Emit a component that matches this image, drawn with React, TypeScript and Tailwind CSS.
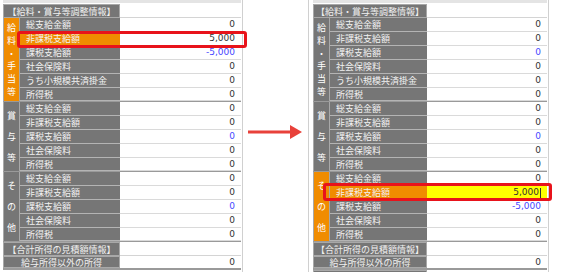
import React from 'react';

type Row = { label: string; value: string; blue?: boolean; yellow?: boolean; hl?: boolean };
type Group = { chars: string[]; rows: Row[]; orange?: boolean };

const jp = { fontFamily: '"Noto Sans CJK JP", "Noto Sans", sans-serif' };
const num = { fontFamily: '"DejaVu Sans", "Liberation Sans", sans-serif' };

const makeGroups = (right: boolean): Group[] => [
  {
    chars: ['給', '料', '・', '手', '当', '等'],
    orange: !right,
    rows: [
      { label: '総支給金額', value: '0' },
      { label: '非課税支給額', value: right ? '0' : '5,000', hl: !right },
      { label: '課税支給額', value: right ? '0' : '-5,000', blue: true },
      { label: '社会保険料', value: '0' },
      { label: 'うち小規模共済掛金', value: '0' },
      { label: '所得税', value: '0' },
    ],
  },
  {
    chars: ['賞', '与', '等'],
    rows: [
      { label: '総支給金額', value: '0' },
      { label: '非課税支給額', value: '0' },
      { label: '課税支給額', value: '0', blue: true },
      { label: '社会保険料', value: '0' },
      { label: '所得税', value: '0' },
    ],
  },
  {
    chars: ['そ', 'の', '他'],
    orange: right,
    rows: [
      { label: '総支給金額', value: '0' },
      { label: '非課税支給額', value: right ? '5,000' : '0', hl: right, yellow: right },
      { label: '課税支給額', value: right ? '-5,000' : '0', blue: true },
      { label: '社会保険料', value: '0' },
      { label: '所得税', value: '0' },
    ],
  },
];

const HeaderRow = ({ text, labelW, valueW }: { text: string; labelW: number; valueW: number }) => (
  <div className="flex h-[14px]">
    <div
      className="flex items-center justify-center border border-[#a8a8a8] bg-[#767676] text-[9px] leading-none text-[#f0f0f0]"
      style={{ ...jp, width: labelW }}
    >
      {text}
    </div>
    <div className="border-b border-[#d4d4d4] bg-white" style={{ width: valueW }} />
  </div>
);

const Sheet = ({ right }: { right: boolean }) => {
  const groupW = 17;
  const labelW = right ? 97 : 100;
  const valueW = right ? 120 : 121;
  const groups = makeGroups(right);

  return (
    <div className="flex flex-col border-t-[3px] border-[#e4e4e4] pt-[1px]">
      <HeaderRow text="【給料・賞与等調整情報】" labelW={groupW + labelW} valueW={valueW} />
      {groups.map((g, gi) => (
        <div key={gi} className="flex border-b border-[#9a9a9a]">
          <div
            className={`flex flex-col items-center justify-around border-r border-l border-[#a8a8a8] py-[3px] text-[9px] leading-[9px] text-white ${
              g.orange ? 'bg-[#f08c00]' : 'bg-[#767676]'
            }`}
            style={{ ...jp, width: groupW }}
          >
            {g.chars.map((c, ci) => (
              <span key={ci} className="block">
                {c}
              </span>
            ))}
          </div>
          <div className="flex flex-col">
            {g.rows.map((r, ri) => (
              <div key={ri} className="flex" style={{ height: ri === g.rows.length - 1 ? 13 : 14 }}>
                <div
                  className={`flex items-center border-b border-[#b4b4b4] pl-[6px] text-[9px] leading-none text-[#f2f2f2] ${
                    r.hl ? 'bg-[#f08c00]' : 'bg-[#767676]'
                  }`}
                  style={{ ...jp, width: labelW }}
                >
                  {r.label}
                </div>
                <div
                  className={`flex items-center justify-end border-b border-[#dadada] pr-[6px] text-[9px] leading-none ${
                    r.yellow ? 'bg-[#ffff00]' : 'bg-white'
                  } ${r.blue ? 'text-[#4848ff]' : 'text-[#333333]'}`}
                  style={{ ...num, width: valueW }}
                >
                  {r.value}
                  {r.yellow && <span className="ml-[1px] h-[10px] w-[1px] bg-[#333333]" />}
                </div>
              </div>
            ))}
          </div>
        </div>
      ))}
      <HeaderRow text="【合計所得の見積額情報】" labelW={groupW + labelW} valueW={valueW} />
      <div className="flex h-[14px] border-b-2 border-[#9a9a9a]">
        <div
          className="flex items-center justify-center border border-[#a8a8a8] bg-[#767676] text-[9px] leading-none text-[#f0f0f0]"
          style={{ ...jp, width: groupW + labelW }}
        >
          給与所得以外の所得
        </div>
        <div
          className="flex items-center justify-end bg-white pr-[6px] text-[9px] leading-none text-[#333333]"
          style={{ ...num, width: valueW }}
        >
          0
        </div>
      </div>
      {right && <HeaderRow text="【社会保険料情報】" labelW={groupW + labelW} valueW={valueW} />}
    </div>
  );
};

export default function App() {
  return (
    <div className="relative h-[272px] w-[566px] overflow-hidden bg-white">
      <div className="flex">
        <div className="flex w-[246px] pl-[3px]">
          <Sheet right={false} />
          <div className="ml-[1px] w-[1px] bg-[#d0d0d0]" />
        </div>
        <div className="w-[57px]" />
        <div className="flex">
          <div className="ml-[5px] w-[1px] bg-[#d0d0d0]" />
          <div className="w-[4px]" />
          <Sheet right />
          <div className="ml-[1px] w-[1px] bg-[#d0d0d0]" />
        </div>
      </div>

      {/* highlight boxes */}
      <div className="absolute left-[17px] top-[31px] h-[17px] w-[230px] rounded-[3px] border-[3px] border-[#e8131b]" />
      <div className="absolute left-[323px] top-[183px] h-[18px] w-[229px] rounded-[3px] border-[3px] border-[#e8131b]" />

      {/* arrow */}
      <svg className="absolute left-[246px] top-[122px]" width="60" height="20" viewBox="0 0 60 20">
        <line x1="2" y1="10" x2="48" y2="10" stroke="#e8413a" strokeWidth="3" />
        <polygon points="44,3 56,10 44,17" fill="#e8413a" />
      </svg>
    </div>
  );
}
